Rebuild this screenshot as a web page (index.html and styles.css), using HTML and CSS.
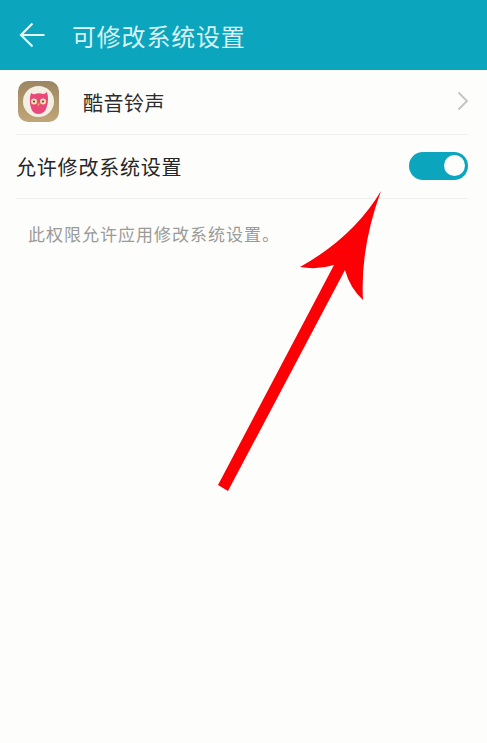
FILE: index.html
```html
<!DOCTYPE html>
<html lang="zh-CN">
<head>
<meta charset="utf-8">
<title>可修改系统设置</title>
<link rel="stylesheet" href="styles.css">
</head>
<body>
<div class="screen">
  <header class="bar">
    <svg class="back" viewBox="0 0 26 26" width="26" height="26"><path d="M13.500 1.500 L2 13 L13.500 24.500 M2 13 H25.500" fill="none" stroke="#e4f6f8" stroke-width="2.200"/></svg>
    <h1 class="title">可修改系统设置</h1>
  </header>
  <div class="row app-row">
    <svg class="app-icon" viewBox="0 0 41 41" width="41" height="41">
      <defs><linearGradient id="g" x1="0" y1="0" x2="0" y2="1"><stop offset="0" stop-color="#9c8663"/><stop offset="1" stop-color="#c0a677"/></linearGradient></defs>
      <rect width="41" height="41" rx="10" fill="url(#g)"/>
      <circle cx="20.500" cy="20.500" r="15.500" fill="#f4efe3"/>
      <path d="M13 12 Q16 14 17 13 Q21 11.500 25 13 Q27 13 29 11 Q31 18 29 25 Q27 33 20.500 33 Q14 33 12.500 25 Q11 18 13 12Z" fill="#e9487a"/>
      <circle cx="16" cy="20.500" r="3" fill="#f5e3b2"/>
      <circle cx="25" cy="20.500" r="3" fill="#f5e3b2"/>
      <circle cx="16" cy="20.500" r="1.100" fill="#5a4436"/>
      <circle cx="25" cy="20.500" r="1.100" fill="#5a4436"/>
      <path d="M19 22.500 H22 L20.500 25.500Z" fill="#e8a93c"/>
    </svg>
    <span class="app-name">酷音铃声</span>
    <svg class="chevron" viewBox="0 0 12 20" width="12" height="20"><path d="M1.500 1.500 L10 10 L1.500 18.500" fill="none" stroke="#c6c6c4" stroke-width="2"/></svg>
  </div>
  <div class="row switch-row">
    <span class="label">允许修改系统设置</span>
    <span class="switch"><span class="knob"></span></span>
  </div>
  <p class="desc">此权限允许应用修改系统设置。</p>
  <svg class="arrow" viewBox="0 0 487 743" width="487" height="743">
    <path d="M381 191 Q353.500 237 300 267 Q318 270 334 265 L218 485 L228 491 L345 270 Q350 288 363 300 Q360 248.500 381 191Z" fill="#fc0006"/>
  </svg>
</div>
</body>
</html>
```

FILE: styles.css
```css
* { box-sizing: border-box; }
html, body { margin: 0; padding: 0; }
body {
  background: #fdfdfb;
  font-family: "Noto Sans CJK SC", "Liberation Sans", sans-serif;
}
.screen {
  position: relative;
  width: 487px;
  height: 743px;
  overflow: hidden;
}
.bar {
  height: 70px;
  background: #0ba5bd;
  display: flex;
  align-items: center;
  padding-left: 19px;
}
.back { flex: none; }
.title {
  margin: 0 0 0 27px;
  font-size: 24px;
  font-weight: 400;
  letter-spacing: 0.8px;
  color: #d9f2f5;
}
.row {
  margin: 0 19px 0 16px;
  display: flex;
  align-items: center;
  border-bottom: 1px solid #f0f0ec;
}
.app-row {
  height: 65px;
}
.app-icon { flex: none; margin-left: 2px; margin-top: -2px; }
.app-name {
  margin-left: 24px;
  font-size: 20px;
  letter-spacing: 0.5px;
  color: #2c2c2c;
}
.chevron { margin-left: auto; margin-right: -1px; margin-top: -3px; }
.switch-row {
  height: 64px;
  justify-content: space-between;
}
.label {
  font-size: 20px;
  letter-spacing: 0.8px;
  color: #262626;
}
.switch {
  width: 59px;
  height: 28px;
  border-radius: 14px;
  background: #0ba5bd;
  display: flex;
  align-items: center;
  justify-content: flex-end;
  padding-right: 3px;
  margin-top: -2px;
}
.knob {
  width: 21px;
  height: 21px;
  border-radius: 50%;
  background: #fdfdfb;
}
.desc {
  margin: 22px 0 0 28px;
  font-size: 17px;
  letter-spacing: 1px;
  line-height: 26px;
  color: #9a9a98;
}
.arrow {
  position: absolute;
  left: 0;
  top: 0;
}
```
